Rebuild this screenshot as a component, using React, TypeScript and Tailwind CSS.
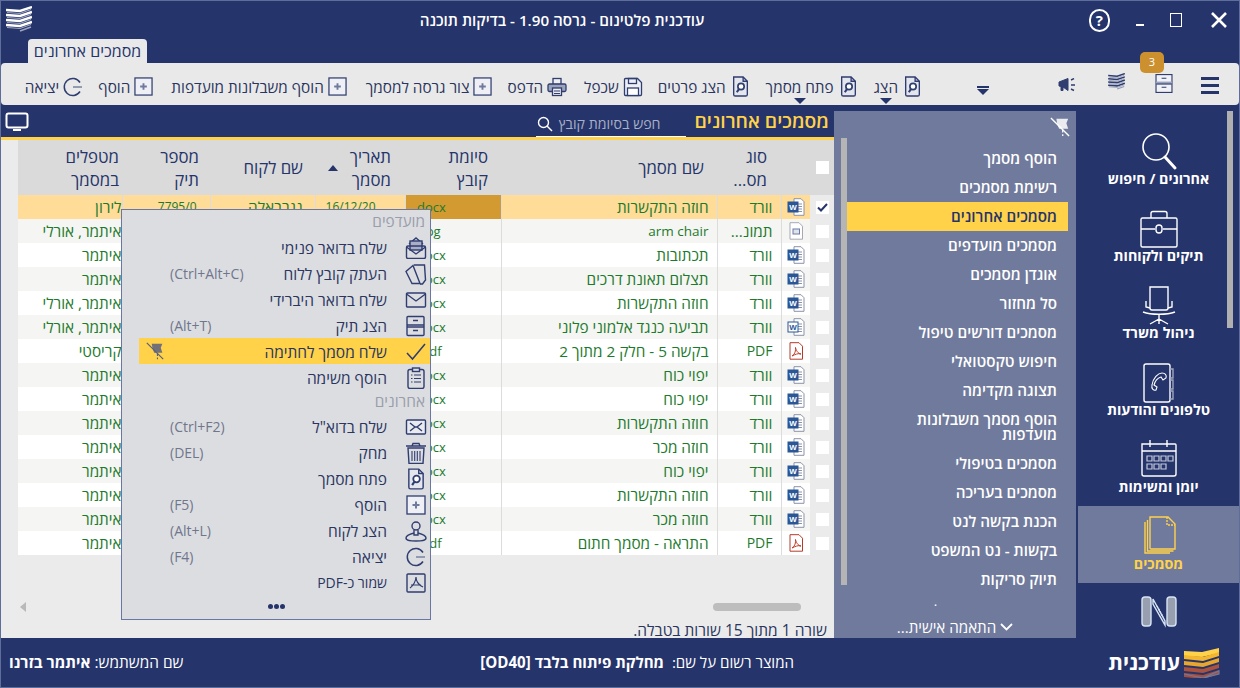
import React from "react";

const N = "#2f3d70";

function Doc({ s = 20, c = N }: { s?: number; c?: string }) {
  return (
    <svg width={s} height={s} viewBox="0 0 20 20" fill="none" stroke={c} strokeWidth="1.3">
      <path d="M3.5 1h9l4 4v12.5a1.5 1.5 0 0 1-1.5 1.5H5a1.5 1.5 0 0 1-1.5-1.5z" fill="#e4e6ee" />
      <path d="M12.5 1v4h4" />
      <circle cx="10.5" cy="10" r="3" strokeWidth="1.6" fill="#fff" />
      <path d="M8.5 12.5L6.5 15.5" strokeWidth="2" />
    </svg>
  );
}
function PlusBox({ s = 19 }: { s?: number }) {
  return (
    <svg width={s} height={s} viewBox="0 0 20 20" fill="#eef0f5" stroke={N} strokeWidth="1.3">
      <rect x="1" y="1" width="18" height="18" />
      <path d="M10 6.5v7M6.5 10h7" stroke="#6f7a9c" strokeWidth="2" />
    </svg>
  );
}
function Printer() {
  return (
    <svg width="20" height="20" viewBox="0 0 20 20" fill="none" stroke={N} strokeWidth="1.3">
      <rect x="6" y="1.5" width="8" height="6" fill="#eee" />
      <rect x="1" y="7" width="18" height="7.5" rx="1.5" fill="#9aa2bc" />
      <rect x="5.5" y="11" width="9" height="7.5" fill="#eee" />
      <path d="M7 14h6M7 16.5h6" strokeWidth="1" />
    </svg>
  );
}
function Save() {
  return (
    <svg width="20" height="20" viewBox="0 0 20 20" fill="none" stroke={N} strokeWidth="1.3">
      <path d="M1.5 2.5a1 1 0 0 1 1-1h12l4 4v12a1 1 0 0 1-1 1h-15a1 1 0 0 1-1-1z" fill="#eef0f5" />
      <rect x="5.5" y="1.5" width="8" height="5" />
      <rect x="4.5" y="11" width="11" height="7.5" fill="#fff" />
    </svg>
  );
}
function Exit({ s = 20, c = N }: { s?: number; c?: string }) {
  return (
    <svg width={s} height={s} viewBox="0 0 20 20" fill="none" stroke={c} strokeWidth="1.5">
      <path d="M17 5.5A8.5 8.5 0 1 0 17 14.5" />
      <path d="M10 10h9" stroke="#8a92ad" strokeWidth="1.8" />
    </svg>
  );
}
function StackLogo({ w = 26, h = 28, dark = false }: { w?: number; h?: number; dark?: boolean }) {
  const a = dark ? N : "#ffffff";
  const b = dark ? "#8f98b6" : "#9ea6bf";
  return (
    <svg width={w} height={h} viewBox="0 0 26 28" fill="none">
      {[3, 8, 13, 18].map((y) => (
        <g key={y}>
          <path d={`M0 ${y + 1}L14 ${y + 2}L26 ${y - 2}`} stroke={a} strokeWidth="2.4" />
          <path d={`M1 ${y + 3.5}L14 ${y + 4.5}L25 ${y + 0.5}`} stroke={b} strokeWidth="1.2" />
        </g>
      ))}
      <path d="M14 25L25 21" stroke={b} strokeWidth="1.6" />
    </svg>
  );
}
function ColorLogo() {
  const rows: [number, string][] = [
    [4, "#f4b62d"],
    [10, "#e8a62e"],
    [16, "#a9523f"],
    [22, "#a64f3e"],
  ];
  return (
    <svg width="37" height="30" viewBox="0 0 37 30" fill="none">
      <path d="M1 3L19 4L36 0V5L19 9L1 8Z" fill="#ffd24a" />
      {rows.map(([y, c]) => (
        <path key={y} d={`M1 ${y + 3}L20 ${y + 5}L36 ${y}V${y + 4}L20 ${y + 9}L1 ${y + 7}Z`} fill={c} />
      ))}
      <path d="M1 26L20 30L36 23V26L20 30" stroke="#6f7a9c" strokeWidth="1.2" />
    </svg>
  );
}
function Cabinet({ s = 20, h = 20 }: { s?: number; h?: number }) {
  return (
    <svg width={s} height={h} viewBox="0 0 18 20" fill="none" stroke={N} strokeWidth="1.2">
      <rect x="0.6" y="0.6" width="16.8" height="18.8" fill="#f1f2f6" />
      <rect x="0.6" y="8" width="16.8" height="3" fill="#9aa2bc" stroke="none" />
      <path d="M0.6 10.5h16.8M6.5 4.5h5M6.5 14h5" />
    </svg>
  );
}
function Word({ big = false }: { big?: boolean }) {
  return (
    <svg width="18" height="18" viewBox="0 0 18 18" fill="none">
      <path d="M7 .7h7l3 3v13.6H7z" fill="#fff" stroke="#8d93a8" />
      <path d="M10 6h5M10 8.5h5M10 11h5M10 13.5h5" stroke="#8d93a8" />
      <rect x={1} y="4" width={10} height="10" fill={big ? "#fff" : "#2b5797"} stroke="#2b5797" />
      <text x="6" y="12" fontSize="8" fontWeight="700" textAnchor="middle" fill={big ? "#2b5797" : "#fff"} fontFamily="'Liberation Sans',sans-serif">W</text>
    </svg>
  );
}
function ImgDoc() {
  return (
    <svg width="18" height="18" viewBox="0 0 18 18" fill="none">
      <path d="M3 .7h9l3.5 3.5v13H3z" fill="#fff" stroke="#a5a9b5" />
      <rect x="6" y="7" width="6.5" height="5" fill="#dfe3ec" stroke="#6c7aa5" />
    </svg>
  );
}
function PdfDoc() {
  return (
    <svg width="18" height="18" viewBox="0 0 18 18" fill="none">
      <path d="M3 .7h9l3.5 3.5v13H3z" fill="#fff" stroke="#b53a2a" />
      <path d="M5 14c3-1.5 4-6 3.5-8.5C9 8 11 12 14 12c-3-1-6 .5-9 2z" stroke="#c23b2a" />
    </svg>
  );
}
function MenuIcon({ k }: { k: string }) {
  const p = { width: 28, height: 22, viewBox: "0 0 28 22", fill: "none", stroke: N, strokeWidth: 1.4 };
  switch (k) {
    case "mailopen":
      return (
        <svg {...p}>
          <path d="M7 7l7-6 7 6" />
          <rect x="8" y="4" width="12" height="9" fill="#a9afc6" />
          <rect x="4.5" y="9" width="19" height="12.5" rx="1.5" />
          <path d="M4.5 10l9.5 7 9.5-7" />
        </svg>
      );
    case "clip":
      return (
        <svg {...p}>
          <path d="M11 2.5l-7 6 6 12h8l-7-18z" />
          <path d="M12 2h10.5l1 15-3 4H18" />
        </svg>
      );
    case "mail":
      return (
        <svg {...p}>
          <rect x="4.5" y="4" width="19" height="14" rx="1" />
          <path d="M4.5 5L14 12l9.500-7" />
        </svg>
      );
    case "cabinet":
      return (
        <svg {...p}>
          <rect x="5" y="1.500" width="17" height="19" rx="1" />
          <path d="M5 10h17M5 12h17M11 5.500h5M11 15.500h5" />
        </svg>
      );
    case "check":
      return (
        <svg {...p}>
          <path d="M5 12l5.500 6L23 3" strokeWidth="1.5" />
        </svg>
      );
    case "list":
      return (
        <svg {...p}>
          <rect x="6" y="2.500" width="16" height="19" rx="2" />
          <rect x="10.500" y="1" width="7" height="3.500" fill="#dcdde1" />
          <path d="M9 8h1.500M12 8h7M9 11.500h1.500M12 11.500h7M9 15h1.500M12 15h7" strokeWidth="1.200" />
        </svg>
      );
    case "mailx":
      return (
        <svg {...p}>
          <rect x="4.500" y="4" width="19" height="14" rx="1" fill="#e9eaee" />
          <path d="M8 7l5 4-5 4M20 7l-5 4 5 4M13 11h2" />
        </svg>
      );
    case "trash":
      return (
        <svg {...p}>
          <path d="M4 4h20M10 4l1-2.500h6l1 2.500" />
          <path d="M6 6h16l-1 15.500H7z" />
          <path d="M10 9v10M12.700 9v10M15.300 9v10M18 9v10" strokeWidth="1.100" />
        </svg>
      );
    case "doc":
      return (
        <span className="flex w-[28px] justify-center">
          <Doc s={22} />
        </span>
      );
    case "plus":
      return (
        <span className="flex w-[28px] justify-center">
          <PlusBox s={20} />
        </span>
      );
    case "person":
      return (
        <svg {...p}>
          <circle cx="14" cy="6" r="4" />
          <path d="M12 10v5h4v-5" />
          <path d="M12 13c-4 1-8 2-8 5 0 3 5 3 10 3s10 0 10-3c0-3-4-4-8-5" />
        </svg>
      );
    case "exit":
      return (
        <span className="flex w-[28px] justify-center">
          <Exit s={20} />
        </span>
      );
    default:
      return (
        <svg {...p}>
          <rect x="5" y="2" width="18" height="18" rx="1" />
          <path d="M14 5c0 4-3 9-6 11M14 5c0 4 3 8 7 10M9 13h10" strokeWidth="1.200" />
        </svg>
      );
  }
}
function Pin({ s = 22, c = "#fff" }: { s?: number; c?: string }) {
  return (
    <svg width={s} height={s} viewBox="0 0 22 22" fill="none" stroke={c}>
      <path d="M7 2h13l-2 5 2 6H10L8 8z" fill={c} opacity="0.85" stroke="none" />
      <path d="M14 14v7" strokeWidth="1.400" strokeDasharray="3 2" />
      <path d="M1 1l20 20" strokeWidth="1.500" />
    </svg>
  );
}

function RibbonBtn({ icon, label, ms, caret }: { icon: React.ReactNode; label: string; ms: string; caret?: boolean }) {
  return (
    <div className={`flex items-center gap-[4px] ${ms}`}>
      <span className="flex shrink-0">{icon}</span>
      <span className="relative whitespace-nowrap leading-[20px]">
        {label}
        {caret && (
          <span className="absolute left-1/2 top-[21px] h-0 w-0 -translate-x-1/2 border-x-[6px] border-t-[6px] border-x-transparent border-t-[#25346b]" />
        )}
      </span>
    </div>
  );
}

type RowT = [string, string, string, string, string, string, string, string];
const ROWS: RowT[] = [
  ["w", "וורד", "חוזה התקשרות", "docx", "16/12/20", "נגרבאלה", "7795/0", "לירון"],
  ["i", "תמונ...", "arm chair", "jpg", "", "", "", "איתמר, אורלי"],
  ["w", "וורד", "תכתובות", "docx", "", "", "", "איתמר"],
  ["w", "וורד", "תצלום תאונת דרכים", "docx", "", "", "", "איתמר"],
  ["w", "וורד", "חוזה התקשרות", "docx", "", "", "", "איתמר, אורלי"],
  ["W", "וורד", "תביעה כנגד אלמוני פלוני", "docx", "", "", "", "איתמר, אורלי"],
  ["p", "PDF", "בקשה 5 - חלק 2 מתוך 2", "pdf", "", "", "", "קריסטי"],
  ["w", "וורד", "יפוי כוח", "docx", "", "", "", "איתמר"],
  ["w", "וורד", "יפוי כוח", "docx", "", "", "", "איתמר"],
  ["w", "וורד", "חוזה התקשרות", "docx", "", "", "", "איתמר"],
  ["w", "וורד", "חוזה מכר", "docx", "", "", "", "איתמר"],
  ["w", "וורד", "יפוי כוח", "docx", "", "", "", "איתמר"],
  ["w", "וורד", "חוזה התקשרות", "docx", "", "", "", "איתמר"],
  ["w", "וורד", "חוזה מכר", "docx", "", "", "", "איתמר"],
  ["p", "PDF", "התראה - מסמך חתום", "pdf", "", "", "", "איתמר"],
];

const SUB: string[] = [
  "הוסף מסמך",
  "רשימת מסמכים",
  "מסמכים אחרונים",
  "מסמכים מועדפים",
  "אוגדן מסמכים",
  "סל מחזור",
  "מסמכים דורשים טיפול",
  "חיפוש טקסטואלי",
  "תצוגה מקדימה",
  "הוסף מסמך משבלונות מועדפות",
  "מסמכים בטיפולי",
  "מסמכים בעריכה",
  "הכנת בקשה לנט",
  "בקשות - נט המשפט",
  "תיוק סריקות",
];

const MENU1: [string, string, string][] = [
  ["mailopen", "שלח בדואר פנימי", ""],
  ["clip", "העתק קובץ ללוח", "(Ctrl+Alt+C)"],
  ["mail", "שלח בדואר היברידי", ""],
  ["cabinet", "הצג תיק", "(Alt+T)"],
  ["check", "שלח מסמך לחתימה", ""],
  ["list", "הוסף משימה", ""],
];
const MENU2: [string, string, string][] = [
  ["mailx", 'שלח בדוא"ל', "(Ctrl+F2)"],
  ["trash", "מחק", "(DEL)"],
  ["doc", "פתח מסמך", ""],
  ["plus", "הוסף", "(F5)"],
  ["person", "הצג לקוח", "(Alt+L)"],
  ["exit", "יציאה", "(F4)"],
  ["pdf", "שמור כ-PDF", ""],
];

function MenuRow({ m }: { m: [string, string, string] }) {
  const active = m[0] === "check";
  return (
    <div className={`ml-[17px] flex h-[26px] items-center pt-[2px] ${active ? "bg-[#ffd24a]" : ""}`}>
      <span className="flex w-[28px] shrink-0 justify-center">
        <MenuIcon k={m[0]} />
      </span>
      <span className={`mr-[15px] whitespace-nowrap leading-[20px] text-[#2a3560] ${m[0] === "pdf" ? "text-[14px]" : "text-[15.500px]"}`}>{m[1]}</span>
      <span dir="ltr" className="mr-auto w-[110px] shrink-0 pl-[31px] text-left text-[14px] leading-[18px] text-[#70768c]">
        {active ? (
          <span className="-ml-[24px] -mt-[2px] block">
            <Pin s={18} c="#5a6080" />
          </span>
        ) : (
          m[2]
        )}
      </span>
    </div>
  );
}

function NavIcon({ k }: { k: string }) {
  const c = k === "docs" ? "#ffd24a" : "#ffffff";
  const p = { width: 44, height: 42, viewBox: "0 0 44 42", fill: "none", stroke: c, strokeWidth: 1.4 };
  switch (k) {
    case "search":
      return (
        <svg {...p}>
          <circle cx="19" cy="16" r="13" strokeWidth="1.600" />
          <path d="M28 26l10 11" strokeWidth="3" strokeLinecap="round" />
        </svg>
      );
    case "case":
      return (
        <svg {...p}>
          <rect x="4" y="10" width="36" height="29" rx="1.500" />
          <path d="M14 10V5.500a2 2 0 0 1 2-2h12a2 2 0 0 1 2 2V10M4 21h14M26 21h14" />
          <rect x="19" y="17" width="6" height="8" rx="3" />
        </svg>
      );
    case "chair":
      return (
        <svg {...p}>
          <path d="M13 2h18v21a2 2 0 0 1-2 2h-14a2 2 0 0 1-2-2z" />
          <path d="M9 16v6l4 1M35 16v6l-4 1" />
          <path d="M6 27c8 3 24 3 32 0M22 29v5M22 34l-9 5M22 34l9 5M22 34v5" />
        </svg>
      );
    case "phone":
      return (
        <svg {...p}>
          <rect x="7" y="2" width="26" height="38" rx="2" />
          <path d="M33 7h3v9h-3M33 18h3v9h-3M33 29h3v8h-3" stroke="#9ea6bf" />
          <path d="M25 11c-4 0-9 5-10 12-1 4 2 6 4 5l1-3-3-2c1-4 4-7 7-8l2 3 3-2c1-3-1-5-4-5z" strokeWidth="1.100" />
        </svg>
      );
    case "cal":
      return (
        <svg {...p}>
          <path d="M5 5h33a1 1 0 0 1 1 1v29a2 2 0 0 1-2 2H7a2 2 0 0 1-2-2z" />
          <path d="M5 12h34M13 1v7M30 1v7" />
          <path d="M10 17h5v5h-5zM17 17h5v5h-5zM24 17h5v5h-5zM31 17h5v5h-5zM10 25h5v5h-5zM17 25h5v5h-5zM24 25h5v5h-5z" stroke="#c5cadb" strokeWidth="1.200" />
        </svg>
      );
    case "docs":
      return (
        <svg {...p}>
          <path d="M8 6v31h25" />
          <path d="M10.500 4v31h26" />
          <path d="M13 1h18l7 7v25H14a1 1 0 0 1-1-1z" />
          <path d="M30 1v8h8" strokeDasharray="2 1" />
        </svg>
      );
    default:
      return (
        <svg {...p} stroke="#d7e4f5">
          <rect x="5" y="1" width="9" height="29" rx="3" fill="#98a0b0" />
          <rect x="30" y="1" width="9" height="29" rx="3" fill="#98a0b0" />
          <path d="M16 3l12 22v4L16 8z" />
          <path d="M20 10l6 11" strokeDasharray="2 1" />
        </svg>
      );
  }
}

const NAV: [string, string][] = [
  ["search", "אחרונים / חיפוש"],
  ["case", "תיקים ולקוחות"],
  ["chair", "ניהול משרד"],
  ["phone", "טלפונים והודעות"],
  ["cal", "יומן ומשימות"],
  ["docs", "מסמכים"],
  ["n", ""],
];

const cellB = "border-l border-[#dcdcdc]";

export default function App() {
  return (
    <div
      dir="rtl"
      className="relative flex h-[688px] w-[1240px] flex-col overflow-hidden border border-[#5f6d9b] bg-[#25346b] font-['Open_Sans','Liberation_Sans',sans-serif]"
    >
      {/* Title bar */}
      <div className="flex h-[38px] shrink-0 items-center text-white">
        <div className="flex w-[150px] items-center gap-[26px] pr-[9px]" style={{ direction: "ltr" }}>
          <span className="order-4 flex items-center">
            <svg width="22" height="22" viewBox="0 0 22 22" fill="none" stroke="#fff" strokeWidth="2.600">
              <path d="M4 4l14 14M18 4L4 18" />
            </svg>
          </span>
          <span className="order-3 h-[14px] w-[14px] border-[1.500px] border-white" />
          <span className="order-2 mt-[9px] h-[2px] w-[9px] bg-white" />
          <span className="order-1 flex h-[23px] w-[23px] items-center justify-center rounded-full border-2 border-white text-[15px] font-bold">?</span>
        </div>
        <div className="flex-1 pr-[6px] text-center text-[15.200px] font-semibold">עודכנית פלטינום - גרסה 1.90 - בדיקות תוכנה</div>
        <div className="ml-[5px] mr-[9px] flex">
          <StackLogo />
        </div>
      </div>
      {/* tab row */}
      <div className="flex h-[24px] shrink-0 justify-end pl-[27px]">
        <div className="flex w-[119px] items-center justify-center rounded-t bg-[#e9e9e9] text-[16px] text-[#25346b]">מסמכים אחרונים</div>
      </div>
      {/* Ribbon */}
      <div className="flex h-[42px] shrink-0 items-center rounded-[4px] bg-[#e9e9e9] pr-[20px] pt-[5px] text-[15.300px] text-[#2a3560]">
        <div className="-mt-[3px] flex flex-col gap-[4px]">
          <span className="h-[3px] w-[18px] bg-[#25346b]" />
          <span className="h-[3px] w-[18px] bg-[#25346b]" />
          <span className="h-[3px] w-[18px] bg-[#25346b]" />
        </div>
        <div className="relative mr-[28px] -mt-[7px]">
          <Cabinet s={18} h={19} />
          <span className="absolute -top-[22px] right-[9px] flex h-[21px] w-[24px] items-center justify-center rounded-[5px] bg-[#cc902f] text-[11px] text-white">3</span>
        </div>
        <div className="mr-[29px] -mt-[9px]">
          <StackLogo w={19} h={18} dark />
        </div>
        <div className="mr-[30px] -mt-[4px]">
          <svg width="19" height="14" viewBox="0 0 19 14" fill={N} stroke={N}>
            <path d="M1 4l9-3.500v12L5 9v3.500H3V8.500L1 8z" />
            <path d="M13 2l3-1.500M13 7h4M13 11l3 1.500" fill="none" strokeWidth="1.400" />
          </svg>
        </div>
        <div className="mr-[69px] mt-[7px] flex flex-col items-center gap-[1px]">
          <span className="h-[2px] w-[12px] bg-[#25346b]" />
          <span className="h-0 w-0 border-x-[6px] border-t-[6px] border-x-transparent border-t-[#25346b]" />
        </div>
        <RibbonBtn ms="mr-[54px]" icon={<Doc s={21} />} label="הצג" caret />
        <RibbonBtn ms="mr-[15px]" icon={<Doc s={21} />} label="פתח מסמך" caret />
        <RibbonBtn ms="mr-[15px]" icon={<Doc s={21} />} label="הצג פרטים" />
        <RibbonBtn ms="mr-[15px]" icon={<Save />} label="שכפל" />
        <RibbonBtn ms="mr-[17px]" icon={<Printer />} label="הדפס" />
        <RibbonBtn ms="mr-[15px]" icon={<PlusBox />} label="צור גרסה למסמך" />
        <RibbonBtn ms="mr-[19px]" icon={<PlusBox />} label="הוסף משבלונות מועדפות" />
        <RibbonBtn ms="mr-[18px]" icon={<PlusBox />} label="הוסף" />
        <RibbonBtn ms="mr-[15px]" icon={<Exit />} label="יציאה" />
      </div>
      {/* Body */}
      <div className="flex min-h-0 flex-1">
        {/* Nav */}
        <div className="relative w-[163px] shrink-0 overflow-hidden pt-[16px]">
          {NAV.map(([k, label]) => (
            <div
              key={k}
              className={`ml-[2px] flex h-[77px] flex-col items-center text-[14.300px] font-bold ${k === "n" ? "justify-start pt-[13px]" : "justify-center"} ${k === "docs" ? "bg-[#707a9c] text-[#ffd24a]" : "text-white"}`}
            >
              <NavIcon k={k} />
              {label && <span className="-mt-[3px] whitespace-nowrap leading-[18px]">{label}</span>}
            </div>
          ))}
          <span className="absolute right-[6px] top-[6px] h-[217px] w-[6px] bg-[#b0b0b0]" />
        </div>
        {/* Sub panel */}
        <div className="relative mt-[6px] flex w-[242px] shrink-0 flex-col bg-[#707a9c] text-[15.200px] font-semibold text-white">
          <div className="flex h-[32.500px] shrink-0 items-start justify-start pr-[6px] pt-[6px]">
            <Pin s={20} />
          </div>
          <div className="mr-[8px] ml-[13px] flex-1">
            {SUB.map((s, i) => (
              <div
                key={s}
                className={`flex items-center pr-[11px] leading-[15px] ${i === 9 ? "h-[44px] pl-[30px]" : "h-[29px]"} ${i === 2 ? "bg-[#ffd24a] text-[#25346b]" : ""}`}
              >
                {s}
              </div>
            ))}
            <div className="pr-[131px] text-[11px] leading-[16px]">.</div>
          </div>
          <div className="flex h-[22px] shrink-0 items-center justify-center gap-[4px] font-normal">
            <svg width="13" height="8" viewBox="0 0 13 8" fill="none" stroke="#fff" strokeWidth="1.800">
              <path d="M1 1l5.500 5.500L12 1" />
            </svg>
            <span>התאמה אישית...</span>
          </div>
          <span className="absolute left-[7px] top-[27px] h-[447px] w-[6px] bg-[#b5b5b5]" />
        </div>
        {/* Main */}
        <div className="flex min-w-0 flex-1 flex-col">
          <div className="flex h-[32px] shrink-0 items-center pr-[5px]">
            <span className="whitespace-nowrap text-[19.300px] font-semibold leading-[24px] text-[#ffd24a]">מסמכים אחרונים</span>
            <div className="mr-[9px] flex h-[25px] w-[150px] items-center justify-between self-end border-b border-white pr-[25px] pl-[1px] text-[14.200px] text-[#a9afc4]">
              <span className="whitespace-nowrap">חפש בסיומת קובץ</span>
              <svg width="16" height="16" viewBox="0 0 16 16" fill="none" stroke="#fff" strokeWidth="1.400">
                <circle cx="6.500" cy="6.500" r="5" />
                <path d="M10 10l5 5" />
              </svg>
            </div>
            <svg className="mr-auto ml-[4px]" width="24" height="19" viewBox="0 0 24 19" fill="none" stroke="#fff" strokeWidth="2">
              <rect x="1.500" y="1.500" width="21" height="14" rx="2" />
              <path d="M8 18h8" />
            </svg>
          </div>
          <div className="h-[3px] shrink-0 bg-[#ffd24a]" />
          <div className="min-h-0 flex-1 bg-[#ebebeb]">
            <table className="w-[816px] table-fixed text-[15.300px] leading-[20px] text-[#1c7a2c]">
              <colgroup>
                <col className="w-[24px]" />
                <col className="w-[29px]" />
                <col className="w-[64px]" />
                <col className="w-[216px]" />
                <col className="w-[96px]" />
                <col className="w-[90px]" />
                <col className="w-[105px]" />
                <col className="w-[88px]" />
                <col className="w-[104px]" />
              </colgroup>
              <thead>
                <tr className="h-[55px] bg-[#dadada] text-right text-[16.800px] leading-[23px] text-[#25346b]">
                  <th className="font-medium">
                    <span className="mx-auto block h-[13px] w-[13px] bg-white" />
                  </th>
                  <th />
                  <th className="pr-[14px] font-medium">סוג<br />מס...</th>
                  <th className="pr-[13px] font-medium">שם מסמך</th>
                  <th className="pr-[13px] font-medium">סיומת<br />קובץ</th>
                  <th className="pr-[14px] font-medium">
                    <div className="flex items-center gap-[12px]">
                      <span>תאריך<br />מסמך</span>
                      <span className="h-0 w-0 border-x-[5px] border-b-[6px] border-x-transparent border-b-[#25346b]" />
                    </div>
                  </th>
                  <th className="pr-[12px] font-medium">שם לקוח</th>
                  <th className="pr-[11px] font-medium">מספר<br />תיק</th>
                  <th className="pr-[3px] font-medium">מטפלים<br />במסמך</th>
                </tr>
              </thead>
              <tbody>
                {ROWS.map((r, i) => {
                  const bg = i === 0 ? "bg-[#ffdc98]" : i % 2 === 1 ? "bg-[#f5f5f3]" : "bg-white";
                  return (
                    <tr key={i} className="h-[24px]">
                      <td className="bg-[#ebebeb] p-0">
                        <span className="mx-auto flex h-[13px] w-[13px] items-center justify-center bg-white">
                          {i === 0 && (
                            <svg width="11" height="9" viewBox="0 0 11 9" fill="none" stroke="#25346b" strokeWidth="2">
                              <path d="M1 4.500l3 3L10 1" />
                            </svg>
                          )}
                        </span>
                      </td>
                      <td className={`${bg} ${cellB} p-0`}>
                        <span className="flex justify-center">
                          {r[0] === "w" ? <Word /> : r[0] === "W" ? <Word big /> : r[0] === "i" ? <ImgDoc /> : <PdfDoc />}
                        </span>
                      </td>
                      <td className={`${bg} ${cellB} truncate p-0 pr-[8px] ${r[0] === "p" ? "text-[14px]" : ""}`}>{r[1]}</td>
                      <td className={`${bg} ${cellB} truncate p-0 pr-[8px] ${r[2] === "arm chair" ? "text-[13.500px]" : ""}`}>{r[2]}</td>
                      <td className={`${i === 0 ? "bg-[#d29a30]" : bg} ${cellB} p-0 pr-[43px] text-center text-[13px]`}>{r[3]}</td>
                      <td className={`${bg} ${cellB} p-0 pr-[29px] text-[12px]`}>{r[4]}</td>
                      <td className={`${bg} ${cellB} p-0 pr-[12px]`}>{r[5]}</td>
                      <td className={`${bg} ${cellB} p-0 pr-[13px] text-[12px]`}>{r[6]}</td>
                      <td className={`${bg} truncate p-0`}>{r[7]}</td>
                    </tr>
                  );
                })}
              </tbody>
            </table>
            <div className="mt-[47px] flex h-[10px] items-center">
              <span className="mr-[33px] h-[8px] w-[88px] rounded-sm bg-[#bdbdbd]" />
              <span className="mr-[687px] h-0 w-0 border-y-[5px] border-r-[6px] border-y-transparent border-r-[#b9b9b9]" />
            </div>
            <div className="mt-[9px] pr-[7px] text-[15.500px] leading-[18px] text-[#2a3560]">שורה 1 מתוך 15 שורות בטבלה.</div>
          </div>
        </div>
      </div>
      {/* Footer */}
      <div className="flex h-[49px] shrink-0 items-center text-[15.100px] text-white">
        <div className="flex w-[133px] shrink-0 items-center gap-[3px] pr-[19px]">
          <ColorLogo />
          <span className="text-[21px] font-bold leading-none">עודכנית</span>
        </div>
        <div className="mr-[312px] whitespace-nowrap">
          המוצר רשום על שם: <span className="mr-[4px] font-bold">מחלקת פיתוח בלבד [OD40]</span>
        </div>
        <div className="mr-auto ml-[8px] whitespace-nowrap text-[15.400px]">
          שם המשתמש: <span className="font-bold">איתמר בזרנו</span>
        </div>
      </div>
      {/* Context menu */}
      <div className="absolute left-[120px] top-[208px] h-[411px] w-[310px] border border-[#6a77a3] bg-[#dcdde1]">
        <div className="flex h-[24px] items-center pr-[5px] text-[15.400px] text-[#9a9eab]">מועדפים</div>
        {MENU1.map((m) => (
          <MenuRow key={m[1]} m={m} />
        ))}
        <div className="flex h-[23px] items-center pr-[5px] text-[15.400px] text-[#9a9eab]">אחרונים</div>
        {MENU2.map((m) => (
          <MenuRow key={m[1]} m={m} />
        ))}
        <div className="mt-[9px] flex justify-center gap-[1px]">
          <span className="h-[5px] w-[5px] rounded-full bg-[#25346b]" />
          <span className="h-[5px] w-[5px] rounded-full bg-[#25346b]" />
          <span className="h-[5px] w-[5px] rounded-full bg-[#25346b]" />
        </div>
      </div>
    </div>
  );
}
